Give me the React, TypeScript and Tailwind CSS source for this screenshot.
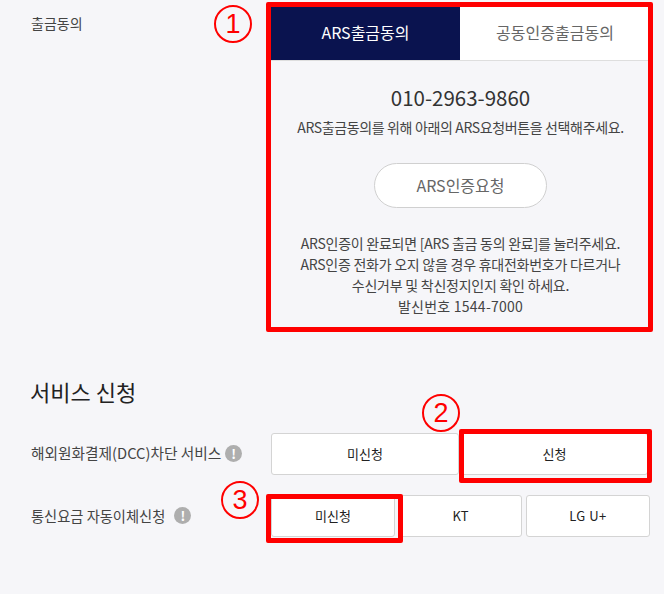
const font = "font-['Noto_Sans_CJK_KR','Noto_Sans',sans-serif]"

const Marker = ({ n, className }: { n: string; className: string }) => (
  <div className={`absolute flex h-[38px] w-[38px] items-center justify-center rounded-full border-2 border-[#ff0000] bg-transparent font-['Liberation_Sans',sans-serif] text-[27px] leading-none text-[#ff0000] ${className}`}>
    {n}
  </div>
)

const Info = () => (
  <span className="flex h-[17px] w-[17px] shrink-0 items-center justify-center rounded-full bg-[#aeaeae] text-[13px] font-bold leading-none text-white">!</span>
)

const Option = ({ label, className }: { label: string; className: string }) => (
  <button type="button" className={`flex h-[42px] items-center justify-center rounded-[3px] border border-[#d4d4d4] bg-white text-[13px] text-[#222] ${className}`}>
    {label}
  </button>
)

export default function App() {
  return (
    <div className={`relative h-[594px] w-[664px] overflow-hidden bg-[#f6f6f9] ${font}`}>
      <div className="flex pl-[31px] pt-[7px]">
        <div className="w-[240px] pt-[6px] text-[14px] leading-5 text-[#444]">출금동의</div>
        <div className="w-[377px]">
          <div className="flex h-[54px] border-b border-[#dedede] bg-white text-[16px]">
            <div className="flex w-[189px] items-center justify-center bg-[#0a134f] pb-[4px] text-white">ARS출금동의</div>
            <div className="flex flex-1 items-center justify-center pb-[4px] pl-[2px] text-[#666]">공동인증출금동의</div>
          </div>
          <div className="flex flex-col items-center pl-[2px] text-center text-[#444]">
            <div className="mt-[23px] text-[20.5px] leading-[27px] text-[#333]">010-2963-9860</div>
            <div className="mt-[6px] text-[14px] leading-5 tracking-[-0.36px]">ARS출금동의를 위해 아래의 ARS요청버튼을 선택해주세요.</div>
            <button type="button" className="mt-[26px] flex h-[45px] w-[173px] items-center justify-center rounded-full border border-[#d0d0d0] bg-white pb-[2px] text-[16px] text-[#666]">
              ARS인증요청
            </button>
            <div className="mt-[25px] text-[14px] leading-[21px] tracking-[-0.25px]">
              <p>ARS인증이 완료되면 [ARS 출금 동의 완료]를 눌러주세요.</p>
              <p>ARS인증 전화가 오지 않을 경우 휴대전화번호가 다르거나</p>
              <p>수신거부 및 착신정지인지 확인 하세요.</p>
              <p className="tracking-[0.25px]">발신번호 1544-7000</p>
            </div>
          </div>
        </div>
      </div>

      <div className="mt-[59px] pl-[31px] pr-[14px]">
        <h2 className="-ml-px text-[22px] leading-[30px] text-[#222]">서비스 신청</h2>
        <div className="mt-[27px] flex items-center">
          <div className="flex w-[240px] items-center gap-[4px] pb-px text-[14.7px] text-[#444]">
            해외원화결제(DCC)차단 서비스 <Info />
          </div>
          <div className="flex gap-[2px]">
            <Option label="미신청" className="w-[188px]" />
            <Option label="신청" className="w-[187px]" />
          </div>
        </div>
        <div className="mt-[20px] flex items-center">
          <div className="flex w-[240px] items-center gap-[9px] pb-px text-[14.25px] text-[#444]">
            통신요금 자동이체신청 <Info />
          </div>
          <div className="flex gap-[4px]">
            <Option label="미신청" className="w-[124px]" />
            <Option label="KT" className="w-[123px]" />
            <Option label="LG U+" className="w-[124px] tracking-[0.5px]" />
          </div>
        </div>
      </div>

      <Marker n="1" className="left-[214px] top-[5px]" />
      <Marker n="2" className="left-[422px] top-[394px]" />
      <Marker n="3" className="left-[221px] top-[481px]" />
      <div className="pointer-events-none absolute left-[266px] top-[2px] h-[330px] w-[387px] rounded-[2px] border-[5px] border-[#ff0000]" />
      <div className="pointer-events-none absolute left-[459px] top-[429px] h-[54px] w-[193px] rounded-[2px] border-[5px] border-[#ff0000]" />
      <div className="pointer-events-none absolute left-[266px] top-[494px] h-[49px] w-[137px] rounded-[2px] border-[5px] border-[#ff0000]" />
    </div>
  )
}
